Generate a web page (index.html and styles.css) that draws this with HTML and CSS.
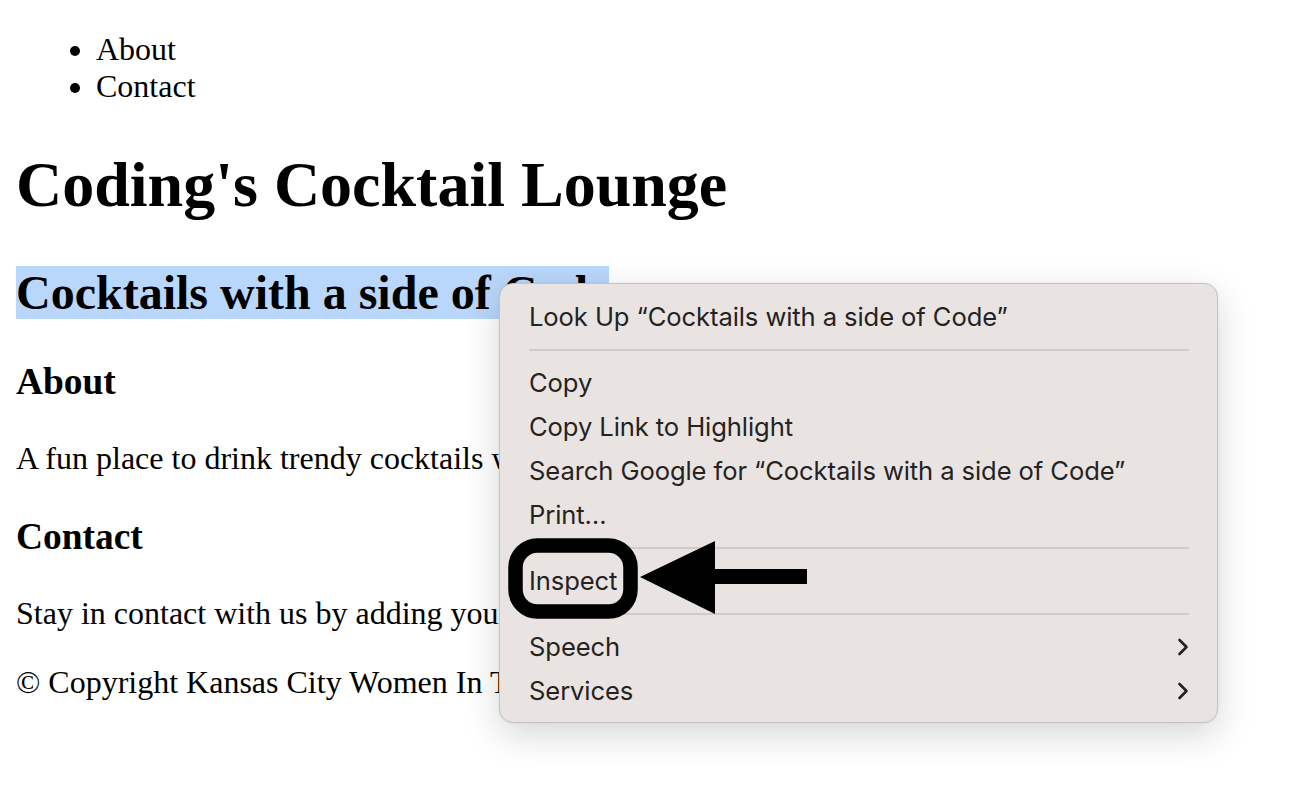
FILE: index.html
```html
<!DOCTYPE html>
<html>
<head>
<meta charset="utf-8">
<link rel="stylesheet" href="styles.css">
</head>
<body>
<nav>
  <ul class="nav-list">
    <li>About</li>
    <li>Contact</li>
  </ul>
</nav>
<h1 class="title">Coding's Cocktail Lounge</h1>
<h2 class="tagline"><span class="selected">Cocktails with a side of Code</span></h2>
<h3 class="section-title">About</h3>
<p class="text">A fun place to drink trendy cocktails while learning to code.</p>
<h3 class="section-title">Contact</h3>
<p class="text">Stay in contact with us by adding your email to our list.</p>
<p class="text">© Copyright Kansas City Women In Tech 2023</p>

<div class="menu">
  <div class="menu-item">Look Up “Cocktails with a side of Code”</div>
  <div class="menu-sep"></div>
  <div class="menu-item">Copy</div>
  <div class="menu-item">Copy Link to Highlight</div>
  <div class="menu-item">Search Google for “Cocktails with a side of Code”</div>
  <div class="menu-item">Print…</div>
  <div class="menu-sep"></div>
  <div class="menu-item">Inspect</div>
  <div class="menu-sep"></div>
  <div class="menu-item has-sub">Speech
    <svg class="chev" width="12" height="18" viewBox="0 0 12 18"><path d="M2.5 2 L9.5 9 L2.5 16" fill="none" stroke="#222" stroke-width="2.6" stroke-linecap="round" stroke-linejoin="round"/></svg>
  </div>
  <div class="menu-item has-sub">Services
    <svg class="chev" width="12" height="18" viewBox="0 0 12 18"><path d="M2.5 2 L9.5 9 L2.5 16" fill="none" stroke="#222" stroke-width="2.6" stroke-linecap="round" stroke-linejoin="round"/></svg>
  </div>
</div>

<svg class="annotation" width="330" height="100" viewBox="0 0 330 100">
  <rect x="22.5" y="8.5" width="115" height="66" rx="22" ry="22" fill="none" stroke="#000" stroke-width="14.5"/>
  <polygon points="147,40 222,4 222,77" fill="#000"/>
  <rect x="220" y="32" width="94" height="15" fill="#000"/>
</svg>
</body>
</html>
```
FILE: styles.css
```css
html, body {
  background: #ffffff;
}
body {
  margin: 0 16px 16px;
  padding-top: 0.1px;
  font-family: "Liberation Serif", "Times New Roman", serif;
  font-size: 32px;
  color: #000;
}
.nav-list {
  margin: 31px 0 32px;
  padding-left: 80px;
}
.title {
  font-size: 64px;
  margin: 42.9px 0;
}
.tagline {
  font-size: 48px;
  margin: 39.8px 0;
}
.selected {
  background: #b9d7fa;
}
.section-title {
  font-size: 37.44px;
  margin: 37.44px 0;
}
.text {
  margin: 32px 0;
}
.menu {
  position: absolute;
  left: 499px;
  top: 283px;
  width: 719px;
  box-sizing: border-box;
  padding: 11px 0 9px;
  background: #e9e4e2;
  border: 1px solid #c7c3c1;
  border-radius: 14px;
  box-shadow: 0 12px 36px rgba(0,0,0,0.16), 0 0 2px rgba(0,0,0,0.1);
  font-family: Inter, "Noto Sans", sans-serif;
  font-size: 25.6px;
  color: #252322;
}
.menu-item {
  height: 44px;
  line-height: 44px;
  padding: 0 28px 0 29px;
  display: flex;
  align-items: center;
  justify-content: space-between;
  letter-spacing: -0.1px;
}
.chev {
  display: block;
}
.menu-sep {
  height: 2px;
  margin: 10px 28px 10px 29px;
  background: #d0cbc8;
}
.annotation {
  position: absolute;
  left: 493px;
  top: 537px;
}
```
